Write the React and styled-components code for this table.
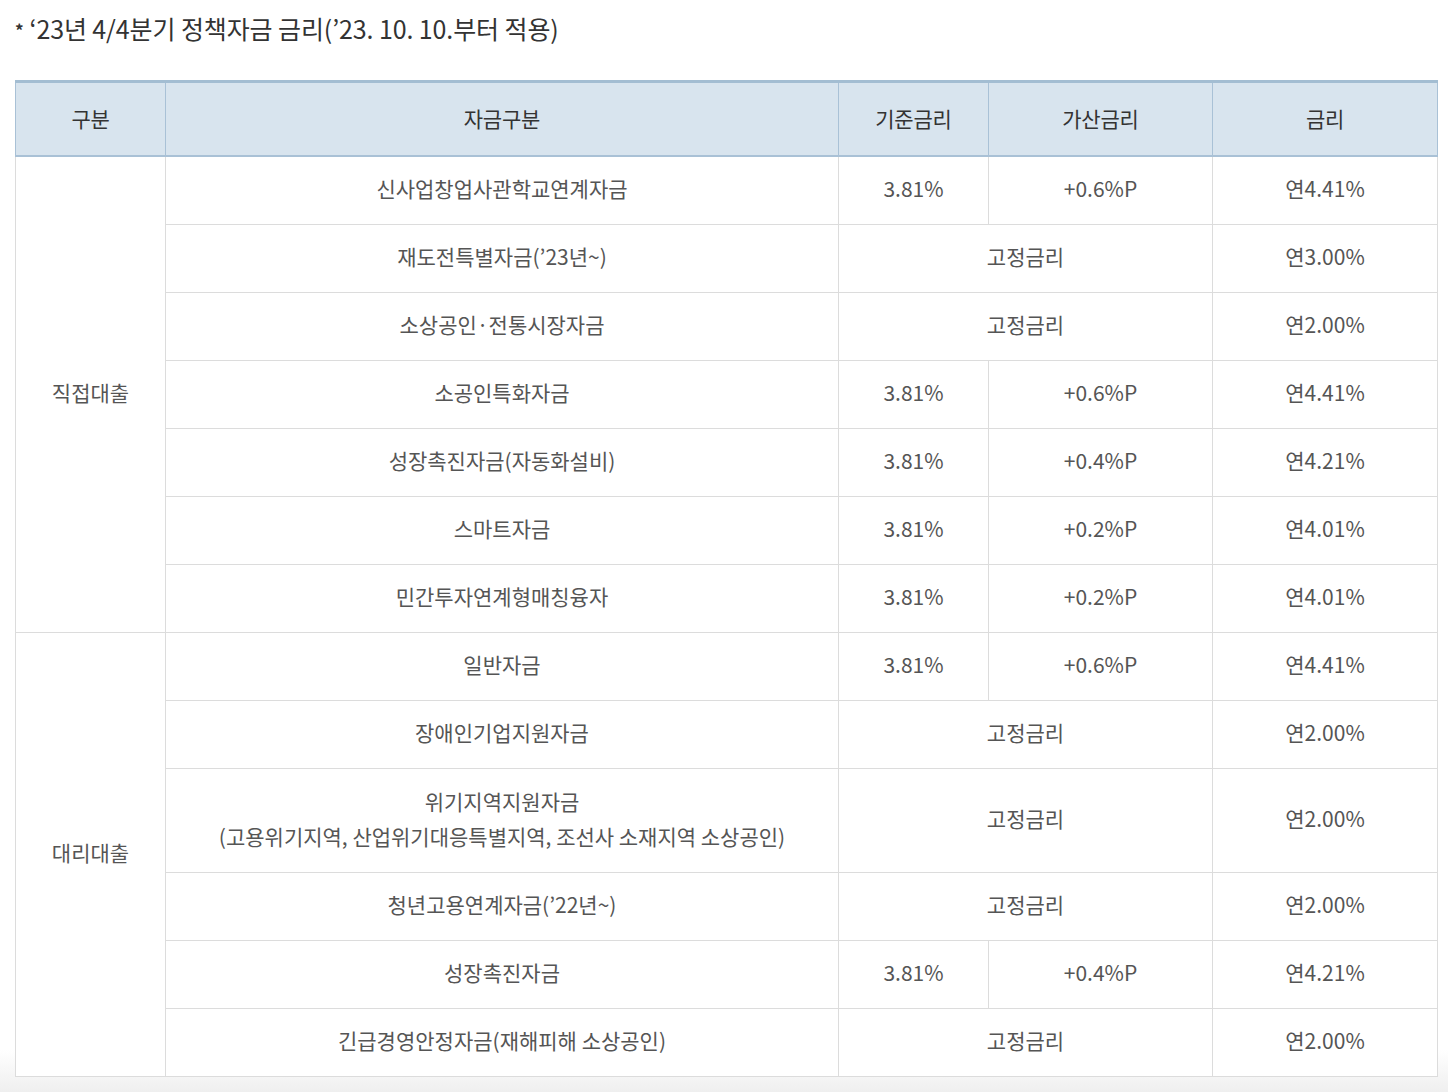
import styled, { createGlobalStyle } from "styled-components";

const GlobalStyle = createGlobalStyle`
  html, body {
    margin: 0;
    padding: 0;
  }
  body {
    font-family: "Noto Sans CJK KR", "Noto Sans", sans-serif;
    color: #555;
  }
`;

const Page = styled.div`
  min-height: 1092px;
  padding: 10px 11px 0 15px;
  box-sizing: border-box;
  background: linear-gradient(to bottom, #ffffff 0, #ffffff 1050px, #efefef 1092px);
`;

const Title = styled.h3`
  margin: 0 0 32px;
  font-size: 25px;
  font-weight: 400;
  line-height: 36px;
  letter-spacing: -0.1px;
  color: #333;
`;

const Star = styled.span`
  font-size: 17px;
  font-weight: 700;
  margin-right: 6px;
  vertical-align: 2px;
`;

const Table = styled.table`
  width: 1422px;
  border-collapse: collapse;
  table-layout: fixed;
  border-top: 3px solid #a3bdd2;
  background: #fff;
`;

const Th = styled.th`
  height: 70px;
  padding: 0 0 2px;
  background: #d8e4ee;
  border: 1px solid #a9c1d6;
  border-top: none;
  border-bottom: 2px solid #a9c1d6;
  font-size: 21px;
  font-weight: 400;
  letter-spacing: -0.2px;
  color: #333;
  text-align: center;
  vertical-align: middle;
`;

const Td = styled.td`
  height: ${(p) => (p.$tall ? "104px" : "68px")};
  padding: 0 0 3px;
  box-sizing: border-box;
  border: 1px solid #dcdcdc;
  font-size: 21px;
  font-weight: 400;
  line-height: 35px;
  letter-spacing: 0;
  color: #555;
  text-align: center;
  vertical-align: middle;
`;

const rows = [
  { group: "직접대출", span: 7, name: "신사업창업사관학교연계자금", base: "3.81%", add: "+0.6%P", rate: "연4.41%" },
  { name: "재도전특별자금(’23년~)", fixed: true, rate: "연3.00%" },
  { name: "소상공인·전통시장자금", fixed: true, rate: "연2.00%" },
  { name: "소공인특화자금", base: "3.81%", add: "+0.6%P", rate: "연4.41%" },
  { name: "성장촉진자금(자동화설비)", base: "3.81%", add: "+0.4%P", rate: "연4.21%" },
  { name: "스마트자금", base: "3.81%", add: "+0.2%P", rate: "연4.01%" },
  { name: "민간투자연계형매칭융자", base: "3.81%", add: "+0.2%P", rate: "연4.01%" },
  { group: "대리대출", span: 6, name: "일반자금", base: "3.81%", add: "+0.6%P", rate: "연4.41%" },
  { name: "장애인기업지원자금", fixed: true, rate: "연2.00%" },
  {
    name: ["위기지역지원자금", "(고용위기지역, 산업위기대응특별지역, 조선사 소재지역 소상공인)"],
    fixed: true,
    rate: "연2.00%",
    tall: true,
  },
  { name: "청년고용연계자금(’22년~)", fixed: true, rate: "연2.00%" },
  { name: "성장촉진자금", base: "3.81%", add: "+0.4%P", rate: "연4.21%" },
  { name: "긴급경영안정자금(재해피해 소상공인)", fixed: true, rate: "연2.00%" },
];

const App = () => {
  return (
    <>
      <GlobalStyle />
      <Page>
        <Title>
          <Star>*</Star>‘23년 4/4분기 정책자금 금리(’23. 10. 10.부터 적용)
        </Title>
        <Table>
          <colgroup>
            <col style={{ width: "150px" }} />
            <col style={{ width: "673px" }} />
            <col style={{ width: "150px" }} />
            <col style={{ width: "224px" }} />
            <col style={{ width: "225px" }} />
          </colgroup>
          <thead>
            <tr>
              <Th>구분</Th>
              <Th>자금구분</Th>
              <Th>기준금리</Th>
              <Th>가산금리</Th>
              <Th>금리</Th>
            </tr>
          </thead>
          <tbody>
            {rows.map((r, i) => (
              <tr key={i}>
                {r.group && <Td rowSpan={r.span}>{r.group}</Td>}
                <Td $tall={r.tall}>
                  {Array.isArray(r.name)
                    ? r.name.map((line) => <div key={line}>{line}</div>)
                    : r.name}
                </Td>
                {r.fixed ? (
                  <Td colSpan={2}>고정금리</Td>
                ) : (
                  <>
                    <Td>{r.base}</Td>
                    <Td>{r.add}</Td>
                  </>
                )}
                <Td>{r.rate}</Td>
              </tr>
            ))}
          </tbody>
        </Table>
      </Page>
    </>
  );
};

export default App;
